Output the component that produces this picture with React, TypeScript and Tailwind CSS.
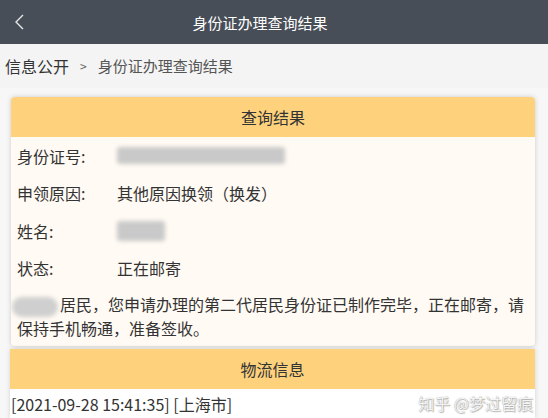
import React from 'react';

const font = { fontFamily: '"Noto Sans CJK SC", "Noto Sans", sans-serif' };

interface RowData {
  label: string;
  value?: string;
  blur?: string;
}

const rows: RowData[] = [
  { label: '身份证号:', blur: 'w-[168px] h-[17px]' },
  { label: '申领原因:', value: '其他原因换领（换发）' },
  { label: '姓名:', blur: 'w-[48px] h-[20px]' },
  { label: '状态:', value: '正在邮寄' },
];

const Watermark = () => (
  <span
    className="absolute right-[2px] bottom-[5px] text-[16px] leading-[22px] text-white/90"
    style={{ textShadow: '0 0 1px rgba(0,0,0,0.45), 1px 1px 1px rgba(0,0,0,0.25)' }}
  >
    知乎 @梦过留痕
  </span>
);

export default function App() {
  return (
    <div className="w-[548px] h-[418px] overflow-hidden bg-[#f7f7f7] text-[#333]" style={font}>
      {/* TOP BAR */}
      <div className="relative h-[44px] bg-[#474e57] flex items-center justify-center pr-[28px]">
        <svg className="absolute left-[14px] top-[14px]" width="12" height="16" viewBox="0 0 12 16">
          <polyline points="9,1 2,8 9,15" fill="none" stroke="#e8e8e8" strokeWidth="1.4" />
        </svg>
        <span className="text-white text-[15px] leading-none">身份证办理查询结果</span>
      </div>

      {/* BREADCRUMB */}
      <div className="h-[44px] bg-[#f4f4f4] flex items-center pl-[5px] text-[16px]">
        <span className="text-[#333]">信息公开</span>
        <span className="text-[#666] text-[12px] ml-[11px] mr-[11px]">&gt;</span>
        <span className="text-[#555] text-[15px]">身份证办理查询结果</span>
      </div>

      {/* RESULT CARD */}
      <div className="mt-[9px] ml-[11px] w-[524px] rounded-[4px] bg-[#fffaf3] shadow-[0_0_5px_rgba(0,0,0,0.18)] overflow-hidden">
        <div className="h-[40px] bg-[#fed27c] flex items-center justify-center text-[16px] text-[#333]">
          查询结果
        </div>
        <div className="px-[6px]">
          {rows.map((r, i) => (
            <div key={i} className="h-[37.5px] flex items-center text-[16px]">
              <span className="w-[100px] shrink-0">{r.label}</span>
              {r.value && <span>{r.value}</span>}
              {r.blur && <span className={`${r.blur} rounded-[3px] bg-[#c9c9c9] blur-[2px]`} />}
            </div>
          ))}
          <p className="pt-[6px] pb-[6px] text-[16px] leading-[23px]">
            <span className="inline-block align-middle w-[46px] h-[20px] -ml-[5px] mr-[2px] rounded-full bg-[#cfcfcf] blur-[2px]" />
            居民，您申请办理的第二代居民身份证已制作完毕，正在邮寄，请保持手机畅通，准备签收。
          </p>
        </div>
      </div>

      {/* LOGISTICS CARD */}
      <div className="relative mt-[3px] ml-[10px] w-[525px] bg-white shadow-[0_0_5px_rgba(0,0,0,0.15)]">
        <div className="h-[40px] bg-[#fed27c] flex items-center justify-center text-[16px] text-[#333]">
          物流信息
        </div>
        <div className="h-[30px] leading-[30px] text-[16px] pl-[1px]">[2021-09-28 15:41:35] [上海市]</div>
        <Watermark />
      </div>
    </div>
  );
}
